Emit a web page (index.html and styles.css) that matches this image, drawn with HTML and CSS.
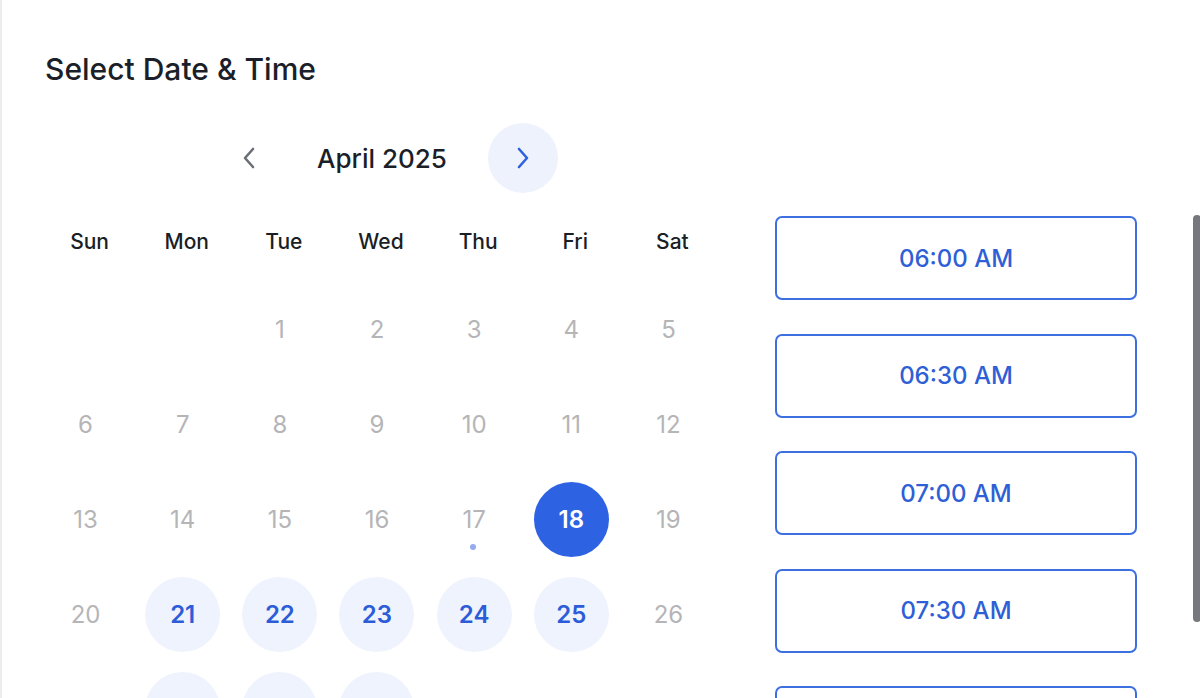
FILE: index.html
```html
<!DOCTYPE html>
<html lang="en">

<head>
    <meta charset="UTF-8">
    <meta name="viewport" content="width=device-width, initial-scale=1.0">
    <title>Select Date &amp; Time</title>
    <link rel="stylesheet" href="styles.css">
</head>

<body>
    <div class="card">
        <h1 class="title">Select Date &amp; Time</h1>

        <div class="picker">
            <!-- calendar -->
            <div class="calendar">
                <div class="cal-nav">
                    <button class="nav-btn prev" aria-label="Previous month">
                        <svg width="14" height="22" viewBox="0 0 14 22"><path d="M11 2L3 11l8 9" fill="none" stroke="currentColor" stroke-width="2.6" stroke-linecap="round" stroke-linejoin="round"/></svg>
                    </button>
                    <span class="month">April 2025</span>
                    <button class="nav-btn next" aria-label="Next month">
                        <svg width="14" height="22" viewBox="0 0 14 22"><path d="M3 2l8 9-8 9" fill="none" stroke="currentColor" stroke-width="2.6" stroke-linecap="round" stroke-linejoin="round"/></svg>
                    </button>
                </div>

                <div class="weekdays">
                    <div>Sun</div>
                    <div>Mon</div>
                    <div>Tue</div>
                    <div>Wed</div>
                    <div>Thu</div>
                    <div>Fri</div>
                    <div>Sat</div>
                </div>

                <div class="days">
                    <div class="day"></div>
                    <div class="day"></div>
                    <div class="day"><span>1</span></div>
                    <div class="day"><span>2</span></div>
                    <div class="day"><span>3</span></div>
                    <div class="day"><span>4</span></div>
                    <div class="day"><span>5</span></div>

                    <div class="day"><span>6</span></div>
                    <div class="day"><span>7</span></div>
                    <div class="day"><span>8</span></div>
                    <div class="day"><span>9</span></div>
                    <div class="day"><span>10</span></div>
                    <div class="day"><span>11</span></div>
                    <div class="day"><span>12</span></div>

                    <div class="day"><span>13</span></div>
                    <div class="day"><span>14</span></div>
                    <div class="day"><span>15</span></div>
                    <div class="day"><span>16</span></div>
                    <div class="day today"><span>17</span></div>
                    <div class="day selected"><span>18</span></div>
                    <div class="day"><span>19</span></div>

                    <div class="day"><span>20</span></div>
                    <div class="day available"><span>21</span></div>
                    <div class="day available"><span>22</span></div>
                    <div class="day available"><span>23</span></div>
                    <div class="day available"><span>24</span></div>
                    <div class="day available"><span>25</span></div>
                    <div class="day"><span>26</span></div>

                    <div class="day"><span>27</span></div>
                    <div class="day available"><span>28</span></div>
                    <div class="day available"><span>29</span></div>
                    <div class="day available"><span>30</span></div>
                    <div class="day"></div>
                    <div class="day"></div>
                    <div class="day"></div>
                </div>
            </div>

            <!-- time slots -->
            <div class="slots">
                <button class="slot">06:00 AM</button>
                <button class="slot">06:30 AM</button>
                <button class="slot">07:00 AM</button>
                <button class="slot">07:30 AM</button>
                <button class="slot">08:00 AM</button>
            </div>
        </div>

        <div class="scroll-thumb"></div>
    </div>
</body>

</html>
```

FILE: styles.css
```css
/* general */
body {
    font-family: Inter, "Noto Sans", Arial, sans-serif;
    background-color: #fff;
    margin: 0;
    padding: 0;
}

button {
    font-family: inherit;
    cursor: pointer;
}

/* card */
.card {
    position: relative;
    height: 698px;
    overflow: hidden;
    border-left: 2px solid #ececec;
    padding-top: 53px;
    box-sizing: border-box;
}

.title {
    margin: 0 0 0 43px;
    font-size: 30px;
    line-height: 32px;
    font-weight: 500;
    color: #1b1f29;
}

.picker {
    display: flex;
    gap: 58px;
    margin-top: 38px;
    padding-left: 35px;
}

/* calendar */
.calendar {
    width: 680px;
    flex-shrink: 0;
}

.cal-nav {
    display: flex;
    align-items: center;
    height: 70px;
    margin-left: 177px;
}

.nav-btn {
    width: 70px;
    height: 70px;
    border: none;
    border-radius: 50%;
    padding: 0;
    display: flex;
    justify-content: center;
    align-items: center;
    background: transparent;
}

.nav-btn.prev {
    color: #6b6e75;
}

.nav-btn.next {
    background-color: #eef2fd;
    color: #2f61df;
}

.month {
    width: 204px;
    padding-right: 8px;
    box-sizing: border-box;
    text-align: center;
    font-size: 26px;
    font-weight: 500;
    color: #1b1f29;
}

.weekdays {
    display: grid;
    grid-template-columns: repeat(7, 1fr);
    margin: 29px -4px 0 4px;
    height: 40px;
    line-height: 40px;
    text-align: center;
    font-size: 21px;
    font-weight: 500;
    color: #1a1e25;
}

.days {
    display: grid;
    grid-template-columns: repeat(7, 1fr);
    grid-auto-rows: 95px;
    margin-top: 19.5px;
}

.day {
    position: relative;
    display: flex;
    justify-content: center;
    align-items: center;
}

.day span {
    width: 75px;
    height: 75px;
    border-radius: 50%;
    display: flex;
    justify-content: center;
    align-items: center;
    font-size: 24px;
    color: #b5b5b7;
}

.day.available span {
    background-color: #eff3fe;
    color: #2c5cd8;
    font-weight: 600;
}

.day.selected span {
    background-color: #2d62e3;
    color: #fff;
    font-weight: 600;
}

/* today marker */
.day.today::after {
    content: "";
    position: absolute;
    left: 50%;
    top: 72px;
    width: 6px;
    height: 6px;
    margin-left: -4px;
    border-radius: 50%;
    background-color: #95aaf0;
}

/* time slots */
.slots {
    width: 362px;
    padding-top: 93px;
    display: flex;
    flex-direction: column;
    gap: 33.5px;
}

.slot {
    height: 84px;
    flex-shrink: 0;
    box-sizing: border-box;
    border: 2px solid #3d6fe0;
    border-radius: 7px;
    background-color: #fff;
    font-size: 24px;
    font-weight: 500;
    color: #2f5fd6;
}

/* scrollbar overlay */
.scroll-thumb {
    position: absolute;
    left: 1191px;
    top: 215px;
    width: 8px;
    height: 407px;
    border-radius: 4px;
    background-color: #77787e;
}
```
